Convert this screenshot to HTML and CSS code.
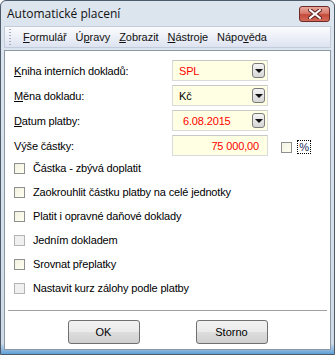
FILE: index.html
```html
<!DOCTYPE html>
<html lang="cs">
<head>
    <meta charset="UTF-8">
    <title>Automatické placení</title>
    <link rel="stylesheet" href="styles.css">
</head>
<body>
    <div class="window">
        <div class="titlebar">
            <span class="title">Automatické placení</span>
            <button class="close-btn" title="Zavřít">
                <svg width="14" height="10" viewBox="0 0 14 10">
                    <path d="M2 1 L12 9 M12 1 L2 9" stroke="#5a2020" stroke-width="4" stroke-linecap="square"/>
                    <path d="M2 1 L12 9 M12 1 L2 9" stroke="#fff" stroke-width="2" stroke-linecap="square"/>
                </svg>
            </button>
        </div>

        <div class="menubar">
            <span class="grip"></span>
            <span class="menu-item"><u>F</u>ormulář</span>
            <span class="menu-item">Ú<u>p</u>ravy</span>
            <span class="menu-item"><u>Z</u>obrazit</span>
            <span class="menu-item"><u>N</u>ástroje</span>
            <span class="menu-item">Nápo<u>v</u>ěda</span>
        </div>

        <div class="client">
            <div class="fields">
                <div class="field-row">
                    <label class="field-label"><u>K</u>niha interních dokladů:</label>
                    <div class="input red">SPL<span class="drop-btn"></span></div>
                </div>
                <div class="field-row">
                    <label class="field-label"><u>M</u>ěna dokladu:</label>
                    <div class="input">Kč<span class="drop-btn"></span></div>
                </div>
                <div class="field-row">
                    <label class="field-label"><u>D</u>atum platby:</label>
                    <div class="input red date">6.08.2015<span class="drop-btn"></span></div>
                </div>
                <div class="field-row">
                    <label class="field-label">Výše částky:</label>
                    <div class="input red amount">75 000,00</div>
                    <span class="checkbox small"></span>
                    <span class="pct-btn">%</span>
                </div>
            </div>

            <div class="options">
                <div class="option"><span class="checkbox"></span>Částka - zbývá doplatit</div>
                <div class="option"><span class="checkbox"></span>Zaokrouhlit částku platby na celé jednotky</div>
                <div class="option"><span class="checkbox"></span>Platit i opravné daňové doklady</div>
                <div class="option"><span class="checkbox disabled"></span>Jedním dokladem</div>
                <div class="option"><span class="checkbox"></span>Srovnat přeplatky</div>
                <div class="option"><span class="checkbox disabled"></span>Nastavit kurz zálohy podle platby</div>
            </div>

            <div class="separator"></div>

            <div class="buttons">
                <button class="btn">OK</button>
                <button class="btn">Storno</button>
            </div>
        </div>
    </div>
</body>
</html>
```

FILE: styles.css
```css
* {
    margin: 0;
    padding: 0;
    box-sizing: border-box;
}

body {
    width: 335px;
    height: 355px;
    overflow: hidden;
    font-family: 'Liberation Sans', Arial, sans-serif;
    font-size: 11px;
    letter-spacing: -0.15px;
    color: #000;
    background: #fff;
}

u {
    text-decoration: underline;
    text-underline-offset: 1px;
}

.window {
    width: 335px;
    height: 355px;
    border: 1px solid #4e5b6b;
    border-radius: 6px 6px 0 0;
    background: linear-gradient(#dde6ef 0%, #d6e0ea 60%, #cfdae6 97%, #5fa0d6 100%);
    display: flex;
    flex-direction: column;
}

.titlebar {
    height: 25px;
    display: flex;
    align-items: center;
    justify-content: space-between;
    padding: 0 4px 0 6px;
}

.title {
    font-family: 'Open Sans', 'Liberation Sans', sans-serif;
    font-size: 12px;
    letter-spacing: 0;
    color: #111;
    margin-top: -1px;
}

.close-btn {
    width: 31px;
    height: 16px;
    margin-top: 0;
    border: 1px solid #6e2a28;
    border-radius: 3px;
    background: linear-gradient(#e7a89c 0%, #d87a6c 45%, #c44a3a 55%, #d46a58 100%);
    display: flex;
    align-items: center;
    justify-content: center;
}

.menubar {
    height: 22px;
    margin: 0 3px;
    border: 1px solid #c3ccda;
    background: linear-gradient(#fafbfd 0%, #eef1f8 45%, #dde3f0 100%);
    display: flex;
    align-items: center;
    font-size: 11px;
    letter-spacing: -0.05px;
}

.grip {
    width: 2px;
    height: 16px;
    margin: 0 12px 0 4px;
    background: repeating-linear-gradient(#a8b0c0 0 1px, transparent 1px 3px);
}

.menu-item {
    margin-right: 9px;
    color: #111;
}

.client {
    flex: 1;
    margin: 2px 3px 4px;
    border: 1px solid #8c98a6;
    background: #fff;
    display: flex;
    flex-direction: column;
}

.fields {
    padding: 9px 0 0 9px;
    display: flex;
    flex-direction: column;
    gap: 4px;
}

.field-row {
    height: 21px;
    display: flex;
    align-items: center;
}

.field-label {
    width: 158px;
}

.input {
    width: 96px;
    height: 21px;
    border: 1px solid #dadada;
    border-top-color: #c8c8c8;
    background: #ffffe3;
    display: flex;
    align-items: center;
    padding-left: 6px;
    position: relative;
}

.input.red {
    color: #f00;
}

.input.date {
    padding-left: 10px;
}

.input.amount {
    justify-content: flex-end;
    padding-right: 8px;
}

.drop-btn {
    position: absolute;
    right: 2px;
    top: 2px;
    width: 13px;
    height: 15px;
    border: 1px solid #7a7a7a;
    border-radius: 3px;
    background: linear-gradient(#f4f4f4, #d6d6d6);
}

.drop-btn::after {
    content: "";
    position: absolute;
    left: 2px;
    top: 5px;
    border-left: 4px solid transparent;
    border-right: 4px solid transparent;
    border-top: 4px solid #111;
}

.checkbox {
    width: 11px;
    height: 11px;
    border: 1px solid #8f8f8f;
    background: linear-gradient(135deg, #f2f2e4, #fffff0);
    display: inline-block;
    flex-shrink: 0;
}

.checkbox.disabled {
    border-color: #b4b4b4;
    background: #f0f0f0;
}

.checkbox.small {
    margin-left: 13px;
    margin-top: 3px;
}

.pct-btn {
    margin-left: 5px;
    margin-top: 2px;
    width: 14px;
    height: 14px;
    border: 1px dotted #000;
    font-size: 11px;
    display: flex;
    align-items: center;
    justify-content: center;
    color: #1a2a5a;
}

.options {
    padding-left: 9px;
    display: flex;
    flex-direction: column;
}

.option {
    height: 24px;
    display: flex;
    align-items: center;
    gap: 8px;
}

.separator {
    margin: 10px 3px 0 3px;
    border-top: 1px solid #a0a0a0;
}

.buttons {
    display: flex;
    justify-content: center;
    gap: 56px;
    padding-top: 9px;
}

.btn {
    width: 72px;
    height: 24px;
    border: 1px solid #707070;
    border-radius: 3px;
    background: linear-gradient(#f2f2f2 0%, #ebebeb 48%, #dddddd 52%, #cfcfcf 100%);
    font-family: 'Liberation Sans', Arial, sans-serif;
    font-size: 11px;
    color: #000;
}
```
